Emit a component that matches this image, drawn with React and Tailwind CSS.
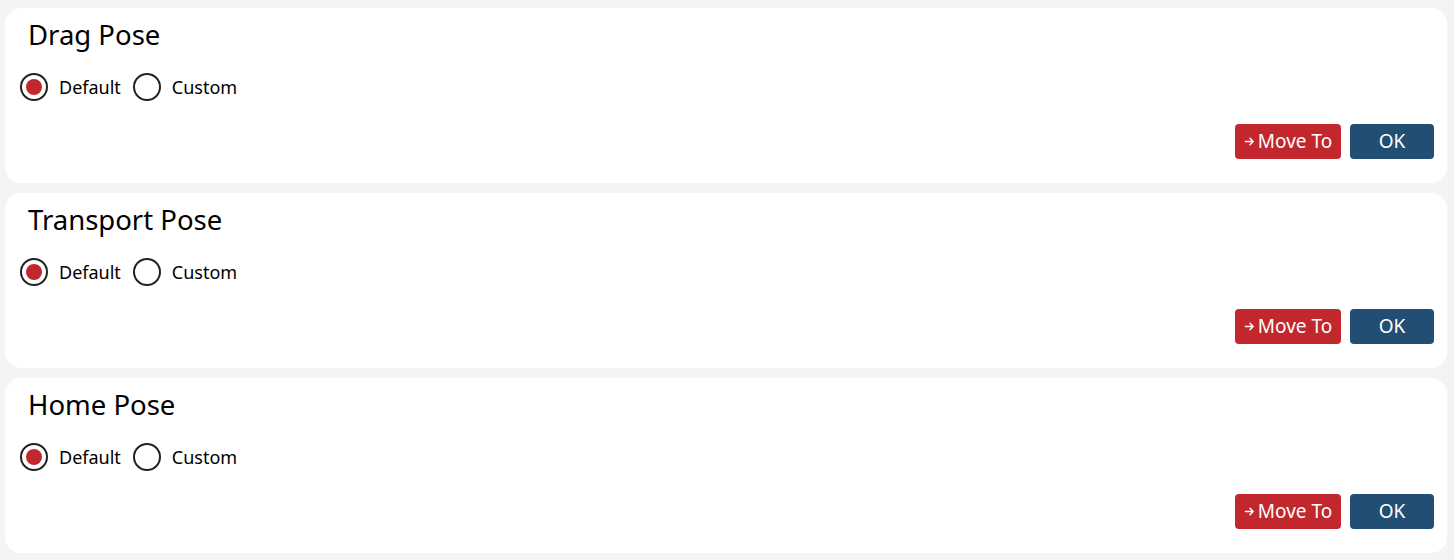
import React from "react";

const poses = ["Drag Pose", "Transport Pose", "Home Pose"];

function Radio({ checked, label }) {
  return (
    <label className="flex items-center gap-[11px]">
      <span className="flex h-[28px] w-[28px] items-center justify-center rounded-full border-2 border-[#222]">
        {checked && <span className="h-[16px] w-[16px] rounded-full bg-[#c1272d]" />}
      </span>
      <span className="text-[18px] text-black">{label}</span>
    </label>
  );
}

function PoseCard({ title }) {
  return (
    <div className="flex h-[175px] flex-col rounded-[16px] bg-white">
      <div className="pl-[23px] pt-[11px] text-[27.5px] leading-[32px] text-black">{title}</div>
      <div className="mt-[22px] flex items-center gap-[12px] pl-[15px]">
        <Radio checked label="Default" />
        <Radio label="Custom" />
      </div>
      <div className="mt-[23px] flex justify-end gap-[9px] pr-[13px]">
        <button className="flex h-[35px] w-[106px] items-center justify-center gap-[3px] rounded-[4px] bg-[#c1272d] text-[19px] text-white">
          <svg width="11" height="11" viewBox="0 0 12 12" fill="none" stroke="white" strokeWidth="1.6" strokeLinecap="round" strokeLinejoin="round">
            <path d="M1.5 6h8.5M6.5 2.5 10 6l-3.5 3.5" />
          </svg>
          <span>Move To</span>
        </button>
        <button className="flex h-[35px] w-[84px] items-center justify-center rounded-[4px] bg-[#234e73] text-[19px] text-white">
          OK
        </button>
      </div>
    </div>
  );
}

export default function App() {
  return (
    <div
      className="flex h-[560px] w-[1454px] flex-col gap-[10px] bg-[#f4f4f4] pb-[7px] pl-[5px] pr-[7px] pt-[8px]"
      style={{ fontFamily: '"Noto Sans", "Open Sans", sans-serif' }}
    >
      {poses.map((p) => (
        <PoseCard key={p} title={p} />
      ))}
    </div>
  );
}
